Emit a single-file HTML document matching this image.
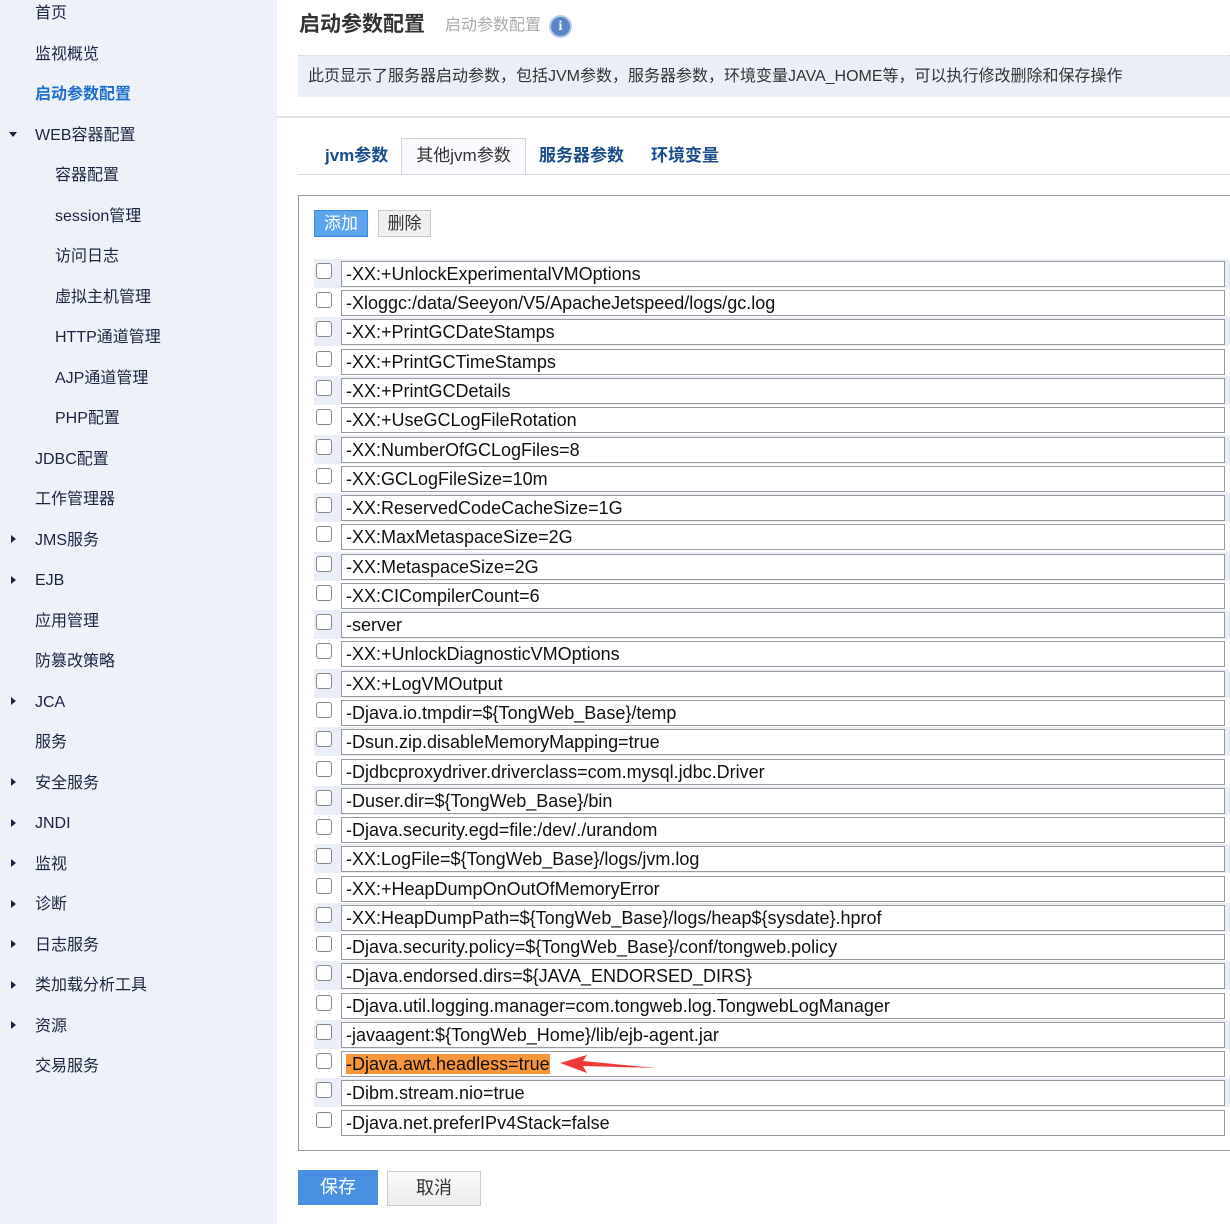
<!DOCTYPE html>
<html><head><meta charset="utf-8">
<style>
*{margin:0;padding:0;box-sizing:border-box}
body{width:1230px;height:1224px;position:relative;background:#fff;font-family:"Liberation Sans","Noto Sans CJK SC",sans-serif;overflow:hidden}
#side{position:absolute;left:0;top:0;width:277px;height:1224px;background:#eef1f7}
#side .in2{position:absolute;left:0;top:2px;width:277px;height:1222px}
.si{position:absolute;font-size:16px;color:#1b2540;line-height:20px;white-space:nowrap}
.tri{position:absolute;left:11px;width:0;height:0}
.tr{border-top:4px solid transparent;border-bottom:4px solid transparent;border-left:5px solid #1b2540}
.td{border-left:4px solid transparent;border-right:4px solid transparent;border-top:5px solid #1b2540;left:9px}
.a{position:absolute}
#rows{position:absolute;left:0;top:1px;width:1230px;height:1224px}
.row{position:absolute;left:314px;width:916px;height:29px}
.row.o{background:#e9eef7}
.cb{position:absolute;left:2px;top:4px;width:16px;height:16px;border:1px solid #8a8a8a;border-radius:3px;background:#fff}
.in{position:absolute;left:27px;top:2px;width:884px;height:26px;border:1px solid #999;background:#fff;font-size:18px;line-height:24px;padding-left:4px;color:#111;white-space:nowrap}
.tab{position:absolute;top:138px;height:36px;font-size:17px;font-weight:bold;color:#1a4d8a;line-height:36px}
</style></head><body>
<div id="side"><div class="in2">
<div class="si" style="left:35px;top:2px">首页</div>
<div class="si" style="left:35px;top:43px">监视概览</div>
<div class="si" style="left:35px;top:83px;color:#1f6fd0;font-weight:bold">启动参数配置</div>
<div class="tri td" style="top:130px"></div><div class="si" style="left:35px;top:124px">WEB容器配置</div>
<div class="si" style="left:55px;top:164px">容器配置</div>
<div class="si" style="left:55px;top:205px">session管理</div>
<div class="si" style="left:55px;top:245px">访问日志</div>
<div class="si" style="left:55px;top:286px">虚拟主机管理</div>
<div class="si" style="left:55px;top:326px">HTTP通道管理</div>
<div class="si" style="left:55px;top:367px">AJP通道管理</div>
<div class="si" style="left:55px;top:407px">PHP配置</div>
<div class="si" style="left:35px;top:448px">JDBC配置</div>
<div class="si" style="left:35px;top:488px">工作管理器</div>
<div class="tri tr" style="top:533px"></div><div class="si" style="left:35px;top:529px">JMS服务</div>
<div class="tri tr" style="top:574px"></div><div class="si" style="left:35px;top:569px">EJB</div>
<div class="si" style="left:35px;top:610px">应用管理</div>
<div class="si" style="left:35px;top:650px">防篡改策略</div>
<div class="tri tr" style="top:695px"></div><div class="si" style="left:35px;top:691px">JCA</div>
<div class="si" style="left:35px;top:731px">服务</div>
<div class="tri tr" style="top:776px"></div><div class="si" style="left:35px;top:772px">安全服务</div>
<div class="tri tr" style="top:817px"></div><div class="si" style="left:35px;top:812px">JNDI</div>
<div class="tri tr" style="top:857px"></div><div class="si" style="left:35px;top:853px">监视</div>
<div class="tri tr" style="top:898px"></div><div class="si" style="left:35px;top:893px">诊断</div>
<div class="tri tr" style="top:938px"></div><div class="si" style="left:35px;top:934px">日志服务</div>
<div class="tri tr" style="top:979px"></div><div class="si" style="left:35px;top:974px">类加载分析工具</div>
<div class="tri tr" style="top:1019px"></div><div class="si" style="left:35px;top:1015px">资源</div>
<div class="si" style="left:35px;top:1055px">交易服务</div>
</div></div>

<div class="a" style="left:299px;top:12px;font-size:21px;font-weight:bold;color:#333;line-height:26px">启动参数配置</div>
<div class="a" style="left:445px;top:16px;font-size:16px;color:#aaa;line-height:20px">启动参数配置</div>
<div class="a" style="left:549px;top:15px;width:23px;height:23px;border-radius:50%;background:#5b86c6;border:2px solid #b9cbe6;color:#fff;font:bold 14px 'Liberation Serif',serif;text-align:center;line-height:19px">i</div>
<div class="a" style="left:298px;top:55px;width:932px;height:42px;background:#e9eef7;border-top:1px dotted #cfd6e2;font-size:16px;color:#333;line-height:42px;padding-left:10px">此页显示了服务器启动参数，包括JVM参数，服务器参数，环境变量JAVA_HOME等，可以执行修改删除和保存操作</div>
<div class="a" style="left:277px;top:116px;width:953px;height:2px;background:#e2e2e2"></div>

<div class="tab" style="left:325px">jvm参数</div>
<div class="tab" style="left:401px;width:125px;border:1px solid #d4d4d4;border-bottom:none;background:#f8fafd;color:#333;text-align:center;font-weight:normal;line-height:34px">其他jvm参数</div>
<div class="tab" style="left:539px">服务器参数</div>
<div class="tab" style="left:651px">环境变量</div>
<div class="a" style="left:298px;top:174px;width:932px;height:1px;background:#d8d8d8"></div>

<div class="a" style="left:298px;top:195px;width:940px;height:956px;border:1px solid #999"></div>
<div class="a" style="left:314px;top:210px;width:54px;height:27px;background:#5aa5ee;border:1px solid #3d8be0;color:#fff;font-size:17px;text-align:center;line-height:25px">添加</div>
<div class="a" style="left:378px;top:210px;width:53px;height:27px;background:#f0f0f0;border:1px solid #c8c8c8;color:#333;font-size:17px;text-align:center;line-height:25px">删除</div>

<div id="rows">
<div class="row o" style="top:258px"><div class="cb"></div><div class="in">-XX:+UnlockExperimentalVMOptions</div></div>
<div class="row" style="top:287px"><div class="cb"></div><div class="in">-Xloggc:/data/Seeyon/V5/ApacheJetspeed/logs/gc.log</div></div>
<div class="row o" style="top:316px"><div class="cb"></div><div class="in">-XX:+PrintGCDateStamps</div></div>
<div class="row" style="top:346px"><div class="cb"></div><div class="in">-XX:+PrintGCTimeStamps</div></div>
<div class="row o" style="top:375px"><div class="cb"></div><div class="in">-XX:+PrintGCDetails</div></div>
<div class="row" style="top:404px"><div class="cb"></div><div class="in">-XX:+UseGCLogFileRotation</div></div>
<div class="row o" style="top:434px"><div class="cb"></div><div class="in">-XX:NumberOfGCLogFiles=8</div></div>
<div class="row" style="top:463px"><div class="cb"></div><div class="in">-XX:GCLogFileSize=10m</div></div>
<div class="row o" style="top:492px"><div class="cb"></div><div class="in">-XX:ReservedCodeCacheSize=1G</div></div>
<div class="row" style="top:521px"><div class="cb"></div><div class="in">-XX:MaxMetaspaceSize=2G</div></div>
<div class="row o" style="top:551px"><div class="cb"></div><div class="in">-XX:MetaspaceSize=2G</div></div>
<div class="row" style="top:580px"><div class="cb"></div><div class="in">-XX:CICompilerCount=6</div></div>
<div class="row o" style="top:609px"><div class="cb"></div><div class="in">-server</div></div>
<div class="row" style="top:638px"><div class="cb"></div><div class="in">-XX:+UnlockDiagnosticVMOptions</div></div>
<div class="row o" style="top:668px"><div class="cb"></div><div class="in">-XX:+LogVMOutput</div></div>
<div class="row" style="top:697px"><div class="cb"></div><div class="in">-Djava.io.tmpdir=${TongWeb_Base}/temp</div></div>
<div class="row o" style="top:726px"><div class="cb"></div><div class="in">-Dsun.zip.disableMemoryMapping=true</div></div>
<div class="row" style="top:756px"><div class="cb"></div><div class="in">-Djdbcproxydriver.driverclass=com.mysql.jdbc.Driver</div></div>
<div class="row o" style="top:785px"><div class="cb"></div><div class="in">-Duser.dir=${TongWeb_Base}/bin</div></div>
<div class="row" style="top:814px"><div class="cb"></div><div class="in">-Djava.security.egd=file:/dev/./urandom</div></div>
<div class="row o" style="top:843px"><div class="cb"></div><div class="in">-XX:LogFile=${TongWeb_Base}/logs/jvm.log</div></div>
<div class="row" style="top:873px"><div class="cb"></div><div class="in">-XX:+HeapDumpOnOutOfMemoryError</div></div>
<div class="row o" style="top:902px"><div class="cb"></div><div class="in">-XX:HeapDumpPath=${TongWeb_Base}/logs/heap${sysdate}.hprof</div></div>
<div class="row" style="top:931px"><div class="cb"></div><div class="in">-Djava.security.policy=${TongWeb_Base}/conf/tongweb.policy</div></div>
<div class="row o" style="top:960px"><div class="cb"></div><div class="in">-Djava.endorsed.dirs=${JAVA_ENDORSED_DIRS}</div></div>
<div class="row" style="top:990px"><div class="cb"></div><div class="in">-Djava.util.logging.manager=com.tongweb.log.TongwebLogManager</div></div>
<div class="row o" style="top:1019px"><div class="cb"></div><div class="in">-javaagent:${TongWeb_Home}/lib/ejb-agent.jar</div></div>
<div class="row" style="top:1048px"><div class="cb"></div><div class="in"><span style="background:#f7963a">-Djava.awt.headless=true</span></div></div>
<div class="row o" style="top:1077px"><div class="cb"></div><div class="in">-Dibm.stream.nio=true</div></div>
<div class="row" style="top:1107px"><div class="cb"></div><div class="in">-Djava.net.preferIPv4Stack=false</div></div>
</div>

<svg class="a" style="left:0;top:0" width="1230" height="1224"><polygon points="560,1063 587,1055 583,1061 656,1068 583,1066 587,1073" fill="#f03a3a"/></svg>

<div class="a" style="left:298px;top:1170px;width:80px;height:35px;background:#4a90e2;color:#fff;font-size:18px;text-align:center;line-height:35px">保存</div>
<div class="a" style="left:387px;top:1171px;width:94px;height:35px;background:linear-gradient(#fafafa,#ececec);border:1px solid #ccc;color:#333;font-size:18px;text-align:center;line-height:33px">取消</div>
</body></html>
